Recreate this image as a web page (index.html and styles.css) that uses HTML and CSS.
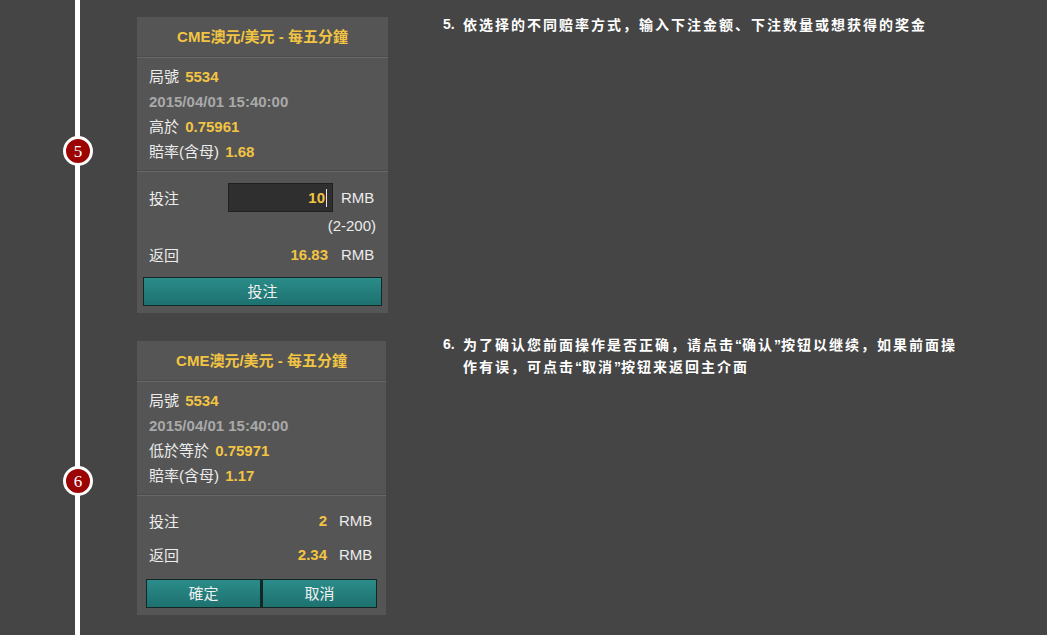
FILE: index.html
```html
<!DOCTYPE html>
<html lang="zh">
<head>
<meta charset="utf-8">
<title>步骤</title>
<link rel="stylesheet" href="styles.css">
</head>
<body>
<main class="page">
  <section class="step step-a">
    <div class="marker"><span class="badge">5</span></div>
    <div class="card card-a">
      <div class="card-head">CME澳元/美元 - 每五分鐘</div>
      <div class="card-info">
        <div class="info-row">局號 <b class="val">5534</b></div>
        <div class="info-row date">2015/04/01 15:40:00</div>
        <div class="info-row">高於 <b class="val">0.75961</b></div>
        <div class="info-row">賠率(含母) <b class="val">1.68</b></div>
      </div>
      <div class="card-bet">
        <div class="bet-row bet-input-row">
          <span class="bet-label">投注</span>
          <span class="bet-input"><b class="val">10</b><i class="caret"></i></span>
          <span class="unit">RMB</span>
        </div>
        <div class="range-row">(2-200)</div>
        <div class="bet-row return-row">
          <span class="bet-label">返回</span>
          <b class="val bet-value">16.83</b>
          <span class="unit">RMB</span>
        </div>
        <div class="btns btns-one">
          <span class="btn">投注</span>
        </div>
      </div>
    </div>
    <p class="note"><b class="note-num">5.</b><span class="note-text">依选择的不同赔率方式，输入下注金额、下注数量或想获得的奖金</span></p>
  </section>

  <section class="step step-b">
    <div class="marker"><span class="badge">6</span></div>
    <div class="card card-b">
      <div class="card-head">CME澳元/美元 - 每五分鐘</div>
      <div class="card-info">
        <div class="info-row">局號 <b class="val">5534</b></div>
        <div class="info-row date">2015/04/01 15:40:00</div>
        <div class="info-row">低於等於 <b class="val">0.75971</b></div>
        <div class="info-row">賠率(含母) <b class="val">1.17</b></div>
      </div>
      <div class="card-bet card-bet-confirm">
        <div class="bet-row confirm-row">
          <span class="bet-label">投注</span>
          <b class="val bet-value">2</b>
          <span class="unit">RMB</span>
        </div>
        <div class="bet-row confirm-row">
          <span class="bet-label">返回</span>
          <b class="val bet-value">2.34</b>
          <span class="unit">RMB</span>
        </div>
        <div class="btns btns-two">
          <span class="btn">確定</span>
          <span class="btn">取消</span>
        </div>
      </div>
    </div>
    <p class="note"><b class="note-num">6.</b><span class="note-text">为了确认您前面操作是否正确，请点击<span class="q">“</span>确认<span class="q">”</span>按钮以继续，如果前面操<br>作有误，可点击<span class="q">“</span>取消<span class="q">”</span>按钮来返回主介面</span></p>
  </section>
</main>
</body>
</html>
```
FILE: styles.css
```css
* { box-sizing: border-box; }
html, body { margin: 0; padding: 0; }
body {
  background: #454545;
  font-family: "Liberation Sans", "Noto Sans CJK TC", sans-serif;
  width: 1047px;
  height: 635px;
  overflow: hidden;
}
.page {
  min-height: 635px;
  padding-top: 14px;
  background: linear-gradient(to right, transparent 75px, #ffffff 75px, #ffffff 80px, transparent 80px);
}
.step {
  display: flex;
  align-items: flex-start;
}
.step-b { margin-top: 21px; }

.marker {
  width: 137px;
  flex: none;
  padding-left: 63px;
}
.step-a .marker { padding-top: 122px; }
.step-b .marker { padding-top: 132px; }
.badge {
  display: flex;
  align-items: center;
  justify-content: center;
  width: 30px;
  height: 30px;
  border-radius: 50%;
  background: #9c0303;
  border: 3px solid #ffffff;
  color: #ffffff;
  font-family: "Liberation Serif", serif;
  font-size: 17px;
  line-height: 1;
}

.card {
  flex: none;
  background: #555555;
  color: #ececec;
  font-size: 15px;
}
.card-a { width: 251px; margin-top: 3px; }
.card-b { width: 249px; margin-top: 7px; }

.card-head {
  height: 41px;
  line-height: 40px;
  text-align: center;
  color: #f2c443;
  font-weight: bold;
  font-size: 15px;
  border-bottom: 1px solid #686868;
  box-shadow: inset 0 -1px 0 #4c4c4c;
}
.card-info {
  padding: 6px 12px 7px;
  border-bottom: 1px solid #686868;
  box-shadow: inset 0 -1px 0 #4c4c4c;
}
.info-row {
  height: 25px;
  line-height: 25px;
  white-space: nowrap;
}
.val {
  color: #f2c443;
  font-weight: bold;
  margin-left: 2px;
}
.date {
  color: #a9a9a9;
  font-weight: bold;
}

.card-bet { padding: 11px 6px 7px; }
.card-bet-confirm { padding: 7px 9px 7px; }
.bet-row {
  display: flex;
  align-items: center;
  padding: 0 0 0 6px;
}
.card-bet-confirm .bet-row { padding-left: 3px; }
.bet-input-row { height: 29px; }
.return-row { height: 28px; }
.confirm-row { height: 34px; }
.bet-label { flex: 1; }
.bet-input {
  width: 105px;
  height: 29px;
  margin-right: 8px;
  background: #2f2f2f;
  border: 1px solid #202020;
  display: flex;
  align-items: center;
  justify-content: flex-end;
  padding-right: 5px;
}
.bet-input .val { margin: 0; }
.caret {
  display: block;
  width: 1px;
  height: 18px;
  background: #e6e6e6;
  margin-left: 1px;
}
.unit {
  width: 41px;
  flex: none;
}
.card-bet-confirm .unit { width: 38px; }
.bet-value { margin: 0 13px 0 0; }
.card-bet-confirm .bet-value { margin-right: 12px; }
.range-row {
  height: 28px;
  line-height: 28px;
  text-align: right;
  padding-right: 6px;
}
.btns {
  display: flex;
  margin-top: 9px;
}
.btns-two { margin-top: 8px; }
.btn {
  flex: 1;
  height: 29px;
  line-height: 27px;
  text-align: center;
  color: #f0f0f0;
  font-size: 15px;
  background: linear-gradient(#2b8c89, #1d716f);
  border: 1px solid #122827;
}
.btns-two .btn + .btn { border-left-width: 2px; }

.note {
  margin: 0 0 0 55px;
  display: flex;
  color: #ffffff;
  font-family: "Noto Sans CJK SC", "Liberation Sans", sans-serif;
  font-weight: bold;
  font-size: 14px;
  line-height: 21px;
}
.step-b .note { margin-left: 57px; }
.note-num {
  width: 20px;
  flex: none;
  font-family: "Liberation Sans", sans-serif;
}
.note-text {
  letter-spacing: 2px;
  white-space: nowrap;
}
.q {
  font-family: "Liberation Sans", sans-serif;
  letter-spacing: 0;
}
```
